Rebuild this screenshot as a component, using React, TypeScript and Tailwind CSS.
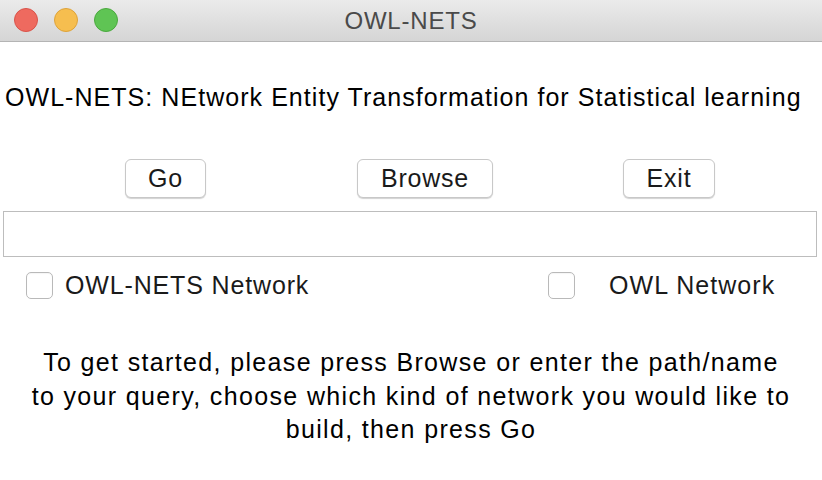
import React from "react";

const font = { fontFamily: '"Helvetica Neue", "Liberation Sans", Arial, sans-serif' };

function Btn({ label, w }: { label: string; w: string }) {
  return (
    <div
      className={`${w} h-[39px] flex items-center justify-center rounded-[6px] bg-white border border-[#c8c8c8] shadow-[0_1px_1px_rgba(0,0,0,0.18)] text-[25px] tracking-[0.8px] text-[#1a1a1a]`}
    >
      {label}
    </div>
  );
}

function Check() {
  return <div className="w-[27px] h-[27px] shrink-0 rounded-[5px] border border-[#b9b9b9] bg-white shadow-[inset_0_1px_1px_rgba(0,0,0,0.04)]" />;
}

export default function App() {
  return (
    <div className="w-[822px] h-[480px] bg-white overflow-hidden flex flex-col" style={font}>
      <div className="h-[42px] shrink-0 relative flex items-center justify-center bg-gradient-to-b from-[#ebebeb] to-[#d5d5d5] border-b border-[#b4b4b4]">
        <div className="absolute left-[14px] top-[8px] flex gap-[16px]">
          <div className="w-[24px] h-[24px] rounded-full bg-[#ee6a5f] border border-[#d9534a]" />
          <div className="w-[24px] h-[24px] rounded-full bg-[#f6be4f] border border-[#dea33a]" />
          <div className="w-[24px] h-[24px] rounded-full bg-[#5fc454] border border-[#4aa93e]" />
        </div>
        <div className="text-[24px] tracking-[0.8px] text-[#4a4a4a]">OWL-NETS</div>
      </div>

      <div className="mt-[38px] pl-[5px] text-[25px] tracking-[1.05px] leading-[34px] text-black whitespace-nowrap">
        OWL-NETS: NEtwork Entity Transformation for Statistical learning
      </div>

      <div className="mt-[45px] flex">
        <div className="ml-[125px]">
          <Btn label="Go" w="w-[81px]" />
        </div>
        <div className="ml-[151px]">
          <Btn label="Browse" w="w-[136px]" />
        </div>
        <div className="ml-[130px]">
          <Btn label="Exit" w="w-[92px]" />
        </div>
      </div>

      <div className="mt-[13px] ml-[3px] w-[814px] h-[46px] border border-[#bdbdbd] bg-white" />

      <div className="mt-[15px] flex items-center h-[27px]">
        <div className="ml-[26px] w-[522px] flex items-center">
          <Check />
          <div className="ml-[12px] text-[25px] tracking-[0.85px] text-[#1a1a1a] whitespace-nowrap">OWL-NETS Network</div>
        </div>
        <Check />
        <div className="ml-[34px] text-[25px] tracking-[1.05px] text-[#1a1a1a] whitespace-nowrap">OWL Network</div>
      </div>

      <div className="mt-[47px] text-center text-[25px] tracking-[1.35px] leading-[33.5px] text-black whitespace-nowrap">
        <div>To get started, please press Browse or enter the path/name</div>
        <div>to your query, choose which kind of network you would like to</div>
        <div>build, then press Go</div>
      </div>
    </div>
  );
}
